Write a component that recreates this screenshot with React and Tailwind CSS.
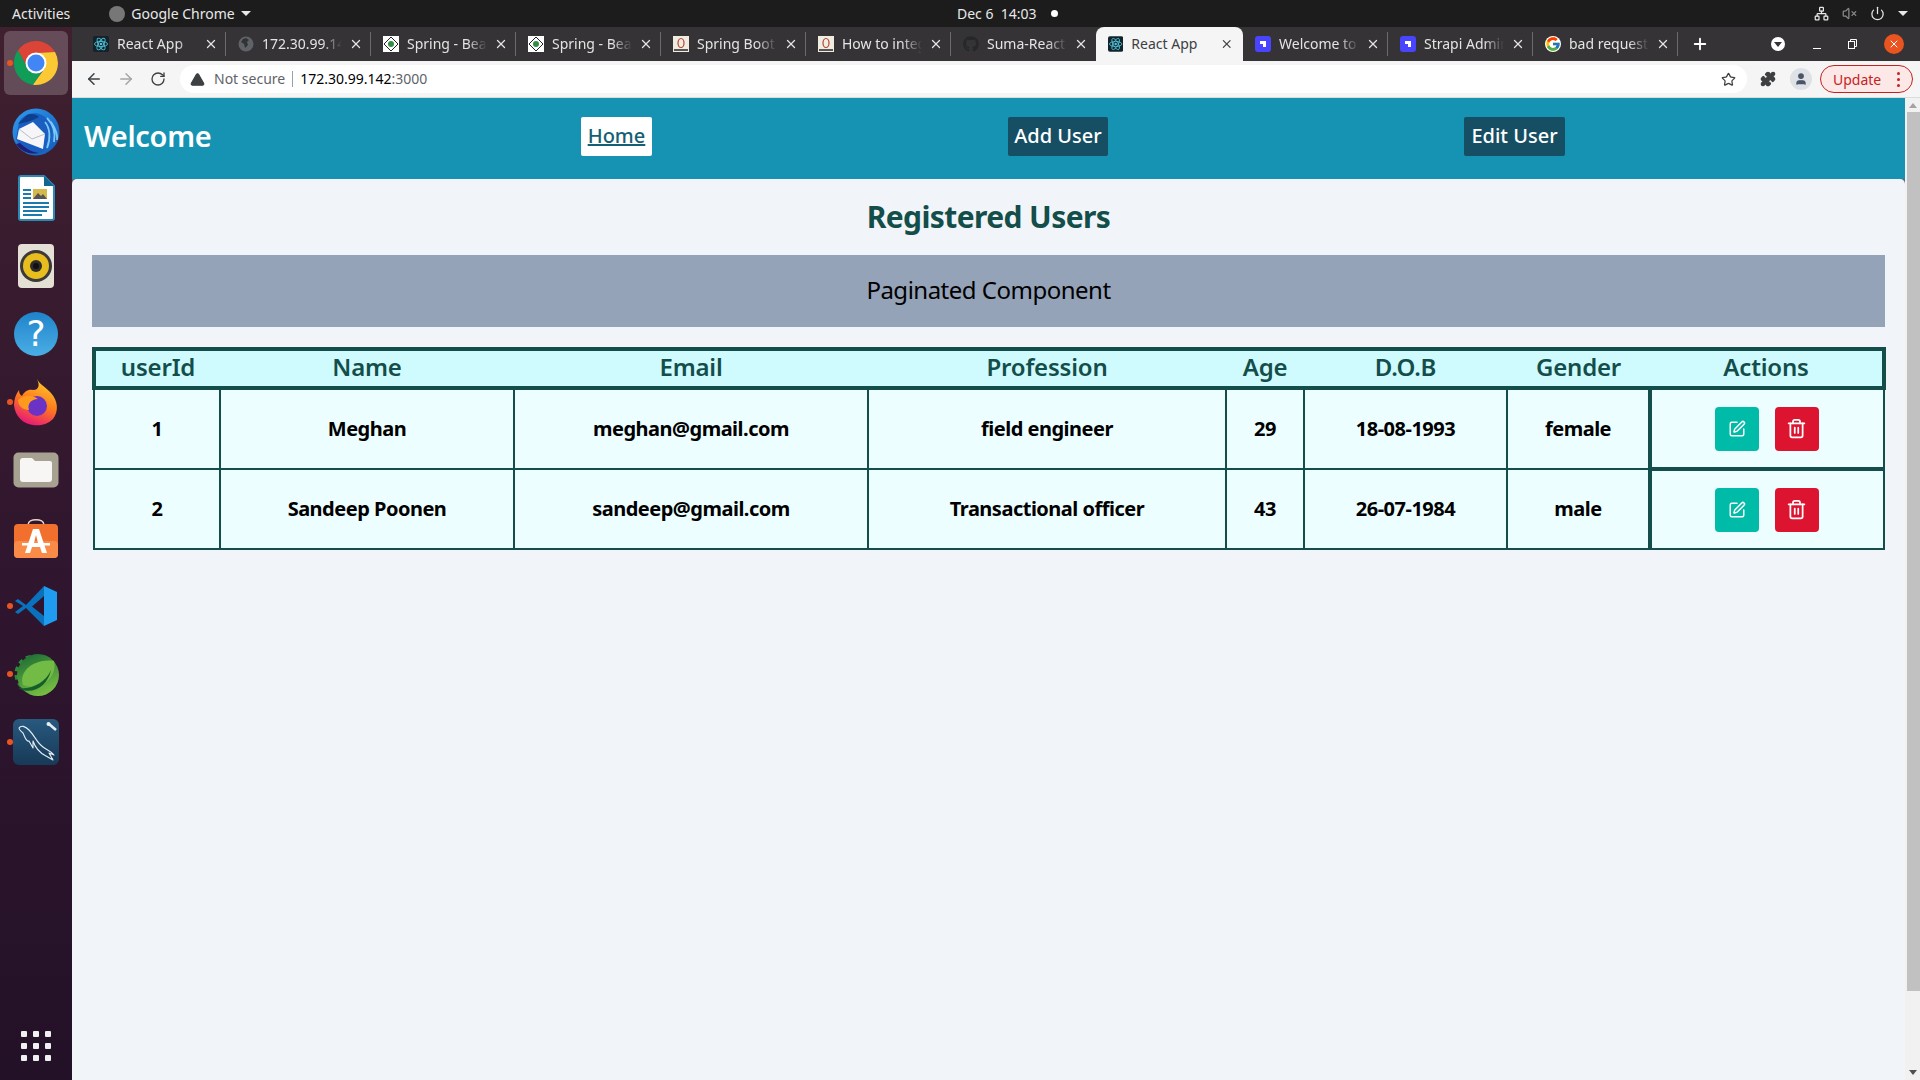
import React from 'react';
import { ArrowLeft, ArrowRight, RotateCw, Star, Puzzle, SquarePen, Trash2, X, Plus, TriangleAlert, VolumeX, Power, Network, User } from 'lucide-react';
import { FaGithub } from 'react-icons/fa';
import { FcGoogle } from 'react-icons/fc';

const FONT = "font-['Noto_Sans',sans-serif]";

const ChromeIcon = ({ size = 48 }) => (
    <svg width={size} height={size} viewBox="0 0 48 48">
        <path d="M6 11.3A22 22 0 0 1 43 13L24 14 15 28Z" fill="#db4437" />
        <path d="M6 11.3L15 28 33 28 21 45.8A22 22 0 0 1 6 11.3Z" fill="#0f9d58" />
        <path d="M43 13A22 22 0 0 1 21 45.8L33 29 24 14Z" fill="#fcc934" />
        <circle cx="24" cy="24" r="10.5" fill="#fff" />
        <circle cx="24" cy="24" r="8.5" fill="#4285f4" />
    </svg>
);

const Thunderbird = () => (
    <svg width="50" height="50" viewBox="0 0 50 50">
        <defs>
            <linearGradient id="tb" x1="0" y1="0" x2="1" y2="1">
                <stop offset="0" stopColor="#2f9bef" />
                <stop offset="1" stopColor="#1259b8" />
            </linearGradient>
        </defs>
        <circle cx="25" cy="26" r="23.500" fill="url(#tb)" />
        <path d="M8 16C14 6 28 4 36 13 44 22 42 38 30 47 20 48 10 42 5 33Z" fill="#1a5fc0" />
        <path d="M36 12C42 18 45 26 43 36M40 16C44 22 47 28 46 34M34 16C39 22 40 32 36 42" fill="none" stroke="#7cc8f7" strokeWidth="1.800" />
        <path d="M9 37C14 42 20 46 28 47 20 49 10 46 5 38Z" fill="#1d1f78" />
        <path d="M7 18L16 9C20 7 25 8 28 11 24 13 20 15 16 16Z" fill="#0d3f8c" />
        <path d="M8 23L22 16 34 28 32 43 6 33Z" fill="#f6f6f8" />
        <path d="M8 23L21 33 34 28" fill="none" stroke="#b9bdc8" strokeWidth="1" />
    </svg>
);

const Writer = () => (
    <svg width="38" height="46" viewBox="0 0 38 46">
        <path d="M2 3A2 2 0 0 1 4 1H27L37 11V43A2 2 0 0 1 35 45H4A2 2 0 0 1 2 43Z" fill="#fff" stroke="#2a8ab5" strokeWidth="2" />
        <path d="M27 1L37 11H27Z" fill="#14668f" />
        <rect x="6" y="14" width="8" height="2" fill="#1b7bae" />
        <rect x="6" y="18" width="8" height="2" fill="#1b7bae" />
        <rect x="6" y="22" width="8" height="2" fill="#1b7bae" />
        <rect x="16" y="14" width="14" height="10" fill="#d5b94a" />
        <path d="M16 24L21 18 24 21 26 19 30 24Z" fill="#555" />
        <rect x="6" y="27" width="26" height="2" fill="#1b7bae" />
        <rect x="6" y="31" width="26" height="2" fill="#1b7bae" />
        <rect x="6" y="35" width="24" height="2" fill="#1b7bae" />
        <rect x="6" y="39" width="19" height="2" fill="#1b7bae" />
    </svg>
);

const Rhythmbox = () => (
    <svg width="38" height="46" viewBox="0 0 38 46">
        <rect x="1" y="1" width="36" height="44" rx="4" fill="#e4e0d6" />
        <circle cx="19" cy="23" r="16" fill="#3b3a38" />
        <circle cx="19" cy="23" r="13" fill="#e8bd1e" />
        <circle cx="19" cy="23" r="6" fill="#2e2d2b" />
        <circle cx="19" cy="23" r="3" fill="#111" />
    </svg>
);

const HelpIcon = () => (
    <div className="w-[44px] h-[44px] rounded-full bg-gradient-to-b from-[#1e83cb] to-[#4aaee5] text-white text-[36px] leading-[44px] text-center font-['DejaVu_Sans',sans-serif]">?</div>
);

const Firefox = () => (
    <svg width="46" height="48" viewBox="0 0 46 48">
        <defs>
            <linearGradient id="ffx" x1="0.7" y1="0" x2="0.3" y2="1">
                <stop offset="0" stopColor="#ffcb2e" />
                <stop offset="0.5" stopColor="#ff7a1c" />
                <stop offset="1" stopColor="#e6127e" />
            </linearGradient>
        </defs>
        <path d="M24 1C27 7 33 9 38 15 45 23 46 33 40 41 34 47 26 48 20 47 10 46 2 38 1 27 1 21 3 16 6 12 6 15 7 17 9 18 11 14 15 11 20 12 26 12 27 7 24 1Z" fill="url(#ffx)" />
        <circle cx="24" cy="28" r="10" fill="#6a33c5" />
        <path d="M5 22C10 17 18 16 25 21 18 21 14 26 16 32 10 32 5 28 5 22Z" fill="#ff9a1f" />
    </svg>
);

const Files = () => (
    <svg width="46" height="36" viewBox="0 0 46 36">
        <rect x="0.5" y="0.5" width="45" height="35" rx="5" fill="#a6a190" />
        <path d="M7 9A3 3 0 0 1 10 6H19L22 9H37A2 2 0 0 1 39 11V27A3 3 0 0 1 36 30H10A3 3 0 0 1 7 27Z" fill="#f8f6f4" />
    </svg>
);

const Software = () => (
    <svg width="46" height="42" viewBox="0 0 46 42">
        <path d="M15 8C15 1 31 1 31 8" fill="none" stroke="#f2d8c0" strokeWidth="1.600" />
        <rect x="1" y="7" width="44" height="34" rx="4" fill="#f2702e" />
        <rect x="1" y="24" width="44" height="17" rx="4" fill="#f98a48" />
        <path d="M20 12H26L34 36H29L27 30H19L17 36H12ZM21 26H25L23 18Z" fill="#fff" />
        <rect x="9" y="26" width="28" height="2.500" fill="#fff" />
    </svg>
);

const VsCode = () => (
    <svg width="44" height="42" viewBox="0 0 44 42">
        <path d="M30 1L43 7V35L30 41Z" fill="#1f9cf0" />
        <path d="M30 1L12 20 4 14 1 16 9 21 1 27 4 29 12 23 30 41V31L18 21.500 30 11Z" fill="#0a71bd" />
    </svg>
);

const Spring = () => (
    <svg width="48" height="44" viewBox="0 0 48 44">
        <defs>
            <linearGradient id="spr" x1="0.3" y1="0" x2="0.7" y2="1">
                <stop offset="0" stopColor="#1f6f35" />
                <stop offset="1" stopColor="#7cc244" />
            </linearGradient>
        </defs>
        <circle cx="22" cy="22" r="16" fill="none" stroke="#2f8a35" strokeWidth="7" strokeDasharray="4 3.500" />
        <circle cx="26" cy="23" r="21" fill="url(#spr)" />
        <path d="M11 33C6 20 22 6 42 9 46 24 30 40 11 33Z" fill="#72bb45" />
        <path d="M6 36C20 38 34 30 39 18 36 34 20 44 6 36Z" fill="#155e2a" />
    </svg>
);

const Workbench = () => (
    <div className="w-[46px] h-[46px] rounded-md bg-gradient-to-b from-[#28597f] to-[#173a57] flex items-center justify-center">
        <svg width="46" height="46" viewBox="0 0 46 46" fill="none">
            <path d="M6 9C8 6 12 7 16 11 22 17 24 24 30 28 34 31 38 32 41 36L36 34 40 41 33 37C27 34 22 28 20 22L20 29 16 22C13 23 12 18 10 14 8 12 6 11 6 9Z" stroke="#e6eef5" strokeWidth="1.100" strokeLinejoin="round" />
            <path d="M36 5L43 11" stroke="#e6eef5" strokeWidth="2.600" />
            <circle cx="35.500" cy="5" r="2" fill="#e6eef5" />
        </svg>
    </div>
);

const AtomIcon = ({ dark }) => (
    <svg width="16" height="16" viewBox="0 0 16 16">
        {dark && <rect width="16" height="16" rx="2" fill="#13232b" />}
        <g fill="none" stroke="#4fc3d9" strokeWidth="0.9">
            <ellipse cx="8" cy="8" rx="6.500" ry="2.600" />
            <ellipse cx="8" cy="8" rx="6.500" ry="2.600" transform="rotate(60 8 8)" />
            <ellipse cx="8" cy="8" rx="6.500" ry="2.600" transform="rotate(120 8 8)" />
        </g>
        <circle cx="8" cy="8" r="1.300" fill="#4fc3d9" />
    </svg>
);

const GlobeIcon = () => (
    <svg width="16" height="16" viewBox="0 0 16 16">
        <circle cx="8" cy="8" r="7.500" fill="#5f6368" />
        <path d="M8 2L11 4 9 6 10 9 7 12 6 8 3 6 5 3Z" fill="#333335" />
    </svg>
);

const GeekIcon = () => (
    <svg width="16" height="16" viewBox="0 0 16 16">
        <rect width="16" height="16" fill="#fff" />
        <path d="M8 1L15 8 8 15 1 8Z" fill="none" stroke="#222" strokeWidth="1" />
        <circle cx="8" cy="8" r="3" fill="#2f8d46" />
    </svg>
);

const BookIcon = () => (
    <svg width="16" height="16" viewBox="0 0 16 16">
        <rect width="16" height="16" fill="#f0ece2" />
        <ellipse cx="8" cy="7" rx="3" ry="4.500" fill="none" stroke="#b4442e" strokeWidth="1.200" />
        <rect x="1" y="13" width="14" height="2" fill="#555" />
    </svg>
);

const StrapiIcon = () => (
    <svg width="16" height="16" viewBox="0 0 16 16">
        <rect width="16" height="16" rx="3" fill="#4945ff" />
        <path d="M5 5H11V11H8V8H5Z" fill="#fff" />
    </svg>
);

const tabs = [
    { title: 'React App', icon: <AtomIcon dark /> },
    { title: '172.30.99.142', icon: <GlobeIcon /> },
    { title: 'Spring - Bean', icon: <GeekIcon /> },
    { title: 'Spring - Bean', icon: <GeekIcon /> },
    { title: 'Spring Boot', icon: <BookIcon /> },
    { title: 'How to integrate', icon: <BookIcon /> },
    { title: 'Suma-React', icon: <FaGithub size={16} color="#26272a" /> },
    { title: 'React App', icon: <AtomIcon dark />, active: true },
    { title: 'Welcome to', icon: <StrapiIcon /> },
    { title: 'Strapi Admin', icon: <StrapiIcon /> },
    { title: 'bad request', icon: <FcGoogle size={16} className="bg-white rounded-full" /> },
];

const users = [
    { id: 1, name: 'Meghan', email: 'meghan@gmail.com', profession: 'field engineer', age: 29, dob: '18-08-1993', gender: 'female' },
    { id: 2, name: 'Sandeep Poonen', email: 'sandeep@gmail.com', profession: 'Transactional officer', age: 43, dob: '26-07-1984', gender: 'male' },
];

const headers = ['userId', 'Name', 'Email', 'Profession', 'Age', 'D.O.B', 'Gender', 'Actions'];
const widths = ['w-[126px]', 'w-[294px]', 'w-[354px]', 'w-[358px]', 'w-[78px]', 'w-[203px]', 'w-[143px]', 'w-[234px]'];

const Tab = ({ tab }) => {
    if (tab.active) {
        return (
            <div className="w-[147px] h-[34px] shrink-0 bg-[#f5f5f5] rounded-t-lg flex items-center pl-3 pr-[10px] text-[#3c4043]">
                {tab.icon}
                <span className="ml-2 w-[92px] text-[14px] leading-[31px] h-[32px] whitespace-nowrap">{tab.title}</span>
                <X size={14} className="ml-auto" strokeWidth={2.2} />
            </div>
        );
    }
    return (
        <div className="w-[145px] h-[34px] shrink-0 flex items-center pl-3 text-[#e4e4e4]">
            <span className="shrink-0">{tab.icon}</span>
            <span className="ml-2 w-[80px] text-[14px] leading-[31px] h-[32px] whitespace-nowrap overflow-hidden [mask-image:linear-gradient(to_right,black_75%,transparent)]">{tab.title}</span>
            <X size={14} className="ml-auto mr-[7px]" strokeWidth={2.2} />
            <span className={`w-px h-[24px] ${tab.noSep ? '' : 'bg-[#6b6b6d]'}`} />
        </div>
    );
};

const DockItem = ({ children, dot, active }) => (
    <div className={`relative w-[64px] h-[64px] flex items-center justify-center rounded-md ${active ? 'bg-white/20' : ''}`}>
        {dot && <span className="absolute left-[3px] top-[29px] w-[6px] h-[6px] rounded-full bg-[#e95420]" />}
        {children}
    </div>
);

export default function App() {
    return (
        <div className={`w-[1920px] h-[1080px] overflow-hidden flex flex-col ${FONT}`}>
            {/* gnome top bar */}
            <div className="h-[27px] shrink-0 bg-[#1c1c1c] text-[#e8e8e8] text-[14px] flex items-center relative">
                <span className="ml-3">Activities</span>
                <span className="ml-[39px] w-[16px] h-[16px] rounded-full bg-[#777]" />
                <span className="ml-[6px]">Google Chrome</span>
                <span className="ml-[6px] border-x-[5px] border-x-transparent border-t-[5px] border-t-[#e8e8e8]" />
                <div className="absolute left-[957px] top-0 h-[27px] flex items-center">
                    <span className="whitespace-pre">Dec 6  14:03</span>
                    <span className="ml-[14px] w-[7px] h-[7px] rounded-full bg-white" />
                </div>
                <div className="ml-auto mr-3 flex items-center gap-[13px] text-[#e8e8e8]">
                    <Network size={15} />
                    <VolumeX size={15} className="text-[#8a8a8a]" />
                    <Power size={15} />
                    <span className="border-x-[5px] border-x-transparent border-t-[5px] border-t-[#e8e8e8]" />
                </div>
            </div>

            <div className="flex-1 flex min-h-0">
                {/* dock */}
                <div className="w-[72px] shrink-0 bg-gradient-to-b from-[#40202f] via-[#30162e] to-[#231128] flex flex-col items-center pt-1 pb-[17px]">
                    <DockItem active dot><ChromeIcon /></DockItem>
                    <div className="mt-[4px]"><DockItem><Thunderbird /></DockItem></div>
                    <div className="mt-[3px]"><DockItem><Writer /></DockItem></div>
                    <div className="mt-[4px]"><DockItem><Rhythmbox /></DockItem></div>
                    <div className="mt-[4px]"><DockItem><HelpIcon /></DockItem></div>
                    <div className="mt-[4px]"><DockItem dot><Firefox /></DockItem></div>
                    <div className="mt-[4px]"><DockItem><Files /></DockItem></div>
                    <div className="mt-[4px]"><DockItem><Software /></DockItem></div>
                    <div className="mt-[4px]"><DockItem dot><VsCode /></DockItem></div>
                    <div className="mt-[4px]"><DockItem dot><Spring /></DockItem></div>
                    <div className="mt-[4px]"><DockItem dot><Workbench /></DockItem></div>
                    <div className="mt-auto grid grid-cols-3 gap-x-[6px] gap-y-[6px] mb-[2px]">
                        {Array.from({ length: 9 }).map((_, i) => (
                            <span key={i} className="w-[6px] h-[6px] rounded-[1px] bg-[#f0f0f0]" />
                        ))}
                    </div>
                </div>

                {/* browser window */}
                <div className="flex-1 min-w-0 flex flex-col">
                    <div className="h-[34px] shrink-0 bg-[#353335] flex items-center pl-[9px]">
                        {tabs.map((tab, i) => (
                            <Tab key={i} tab={{ ...tab, noSep: i === 6 }} />
                        ))}
                        <Plus size={18} className="ml-[13px] text-white" strokeWidth={2.5} />
                        <span className="ml-[62px] w-[14px] h-[14px] rounded-full bg-white flex items-center justify-center">
                            <span className="border-x-[4px] border-x-transparent border-t-[5px] border-t-[#353335]" />
                        </span>
                        <span className="ml-[28px] mt-[8px] w-[8px] h-[1px] bg-white" />
                        <svg className="ml-[26px]" width="10" height="10" viewBox="0 0 10 10" fill="none" stroke="#fff">
                            <rect x="1.500" y="2.500" width="6" height="7" />
                            <path d="M3.500 2.500V0.500H9.500V7.500H7.500" />
                        </svg>
                        <span className="ml-[27px] w-[20px] h-[20px] rounded-full bg-[#e95420] flex items-center justify-center">
                            <X size={12} className="text-white" />
                        </span>
                    </div>

                    <div className="h-[37px] shrink-0 bg-[#f5f5f5] border-b border-[#dcdcdc] flex items-center text-[#5f6368]">
                        <ArrowLeft size={18} className="ml-[13px] text-[#3c4043]" />
                        <ArrowRight size={18} className="ml-[14px] text-[#a5a5a5]" />
                        <RotateCw size={16} className="ml-[15px] text-[#3c4043]" />
                        <div className="ml-[14px] w-[1567px] h-[28px] bg-white rounded-full flex items-center shrink-0">
                            <TriangleAlert size={15} className="ml-[10px] text-[#3c4043] fill-[#3c4043] stroke-[#3c4043]" />
                            <span className="ml-[9px] text-[14px] leading-none">Not secure</span>
                            <span className="ml-[7px] w-px h-[16px] bg-[#9aa0a6]" />
                            <span className="ml-[7px] text-[14px] leading-none text-black">172.30.99.142<span className="text-[#5f6368]">:3000</span></span>
                            <Star size={15} className="ml-auto mr-[11px] text-[#3c4043]" />
                        </div>
                        <Puzzle size={16} className="ml-[13px] text-[#3c4043] fill-[#3c4043]" />
                        <span className="ml-[14px] w-[22px] h-[22px] rounded-full bg-[#dee1e6] flex items-center justify-center">
                            <User size={14} className="text-[#4a5568] fill-[#4a5568]" />
                        </span>
                        <div className="ml-[8px] w-[93px] h-[28px] rounded-full border border-[#c5221f] bg-[#fce8e6] text-[#c5221f] text-[14px] flex items-center pl-3">
                            Update
                            <span className="ml-auto mr-[12px] flex flex-col gap-[3px]">
                                <span className="w-[3px] h-[3px] rounded-full bg-[#c5221f]" />
                                <span className="w-[3px] h-[3px] rounded-full bg-[#c5221f]" />
                                <span className="w-[3px] h-[3px] rounded-full bg-[#c5221f]" />
                            </span>
                        </div>
                    </div>

                    <div className="flex-1 min-h-0 flex">
                        {/* page */}
                        <div className="flex-1 min-w-0 bg-[#6f6478] flex flex-col">
                            <div className="h-[81px] shrink-0 bg-[#1693b2] flex items-start pl-3 pt-[19px] text-white">
                                <h1 className="w-[497px] text-[29px] font-semibold leading-[38px] tracking-[-0.3px]">Welcome</h1>
                                <div className="flex gap-[356px] text-[20px] font-medium leading-[37px]">
                                    <a className="w-[71px] h-[39px] bg-white text-[#155e75] underline rounded-[2px] text-center">Home</a>
                                    <a className="w-[100px] h-[39px] bg-[#164e63] rounded-[2px] text-center">Add User</a>
                                    <a className="w-[101px] h-[39px] bg-[#164e63] rounded-[2px] text-center">Edit User</a>
                                </div>
                            </div>

                            <div className="flex-1 bg-[#f1f5f9] rounded-t-[5px] px-5 pt-[18px]">
                                <h2 className="text-[30px] font-bold text-[#134e4a] text-center leading-[40px] tracking-[-0.6px]">Registered Users</h2>
                                <div className="mt-[18px] h-[72px] bg-[#94a3b8] flex items-center justify-center text-[24px] text-black tracking-[-0.5px] pb-[2px]">Paginated Component</div>
                                <table className="mt-[20px] w-[1790px] table-fixed border-collapse text-center">
                                    <colgroup>
                                        {widths.map((w) => <col key={w} className={w} />)}
                                    </colgroup>
                                    <thead>
                                        <tr className="h-[39px] bg-[#cffafe] border-4 border-[#134e4a] text-[#134e4a] text-[24px]">
                                            {headers.map((h) => <th key={h} className="font-semibold leading-none tracking-[-0.2px] p-0 pb-[3px]">{h}</th>)}
                                        </tr>
                                    </thead>
                                    <tbody>
                                        {users.map((u, i) => (
                                            <tr key={u.id} className={`${i === 0 ? 'h-[81px]' : 'h-[80px]'} bg-[#ecfeff] text-[20px] font-bold text-black tracking-[-0.5px]`}>
                                                <td className="border-2 border-[#134e4a]">{u.id}</td>
                                                <td className="border-2 border-[#134e4a]">{u.name}</td>
                                                <td className="border-2 border-[#134e4a]">{u.email}</td>
                                                <td className="border-2 border-[#134e4a]">{u.profession}</td>
                                                <td className="border-2 border-[#134e4a]">{u.age}</td>
                                                <td className="border-2 border-[#134e4a]">{u.dob}</td>
                                                <td className="border-2 border-[#134e4a]">{u.gender}</td>
                                                <td className="border-4 border-b-2 border-r-2 border-[#134e4a]">
                                                    <div className="flex items-center justify-center gap-4 pr-[2px]">
                                                        <button className="w-[44px] h-[44px] rounded bg-[#00bba7] text-white flex items-center justify-center">
                                                            <SquarePen size={18} />
                                                        </button>
                                                        <button className="w-[44px] h-[44px] rounded bg-[#dc1430] text-white flex items-center justify-center">
                                                            <Trash2 size={21} />
                                                        </button>
                                                    </div>
                                                </td>
                                            </tr>
                                        ))}
                                    </tbody>
                                </table>
                            </div>
                        </div>

                        {/* scrollbar */}
                        <div className="w-[15px] shrink-0 bg-[#f1f1f1] flex flex-col items-center">
                            <span className="mt-[5px] border-x-[4px] border-x-transparent border-b-[5px] border-b-[#a3a3a3]" />
                            <span className="mt-[4px] w-[13px] h-[879px] ml-[2px] bg-[#c1c1c1]" />
                            <span className="mt-auto mb-[5px] border-x-[4px] border-x-transparent border-t-[5px] border-t-[#505050]" />
                        </div>
                    </div>
                </div>
            </div>
        </div>
    );
}
